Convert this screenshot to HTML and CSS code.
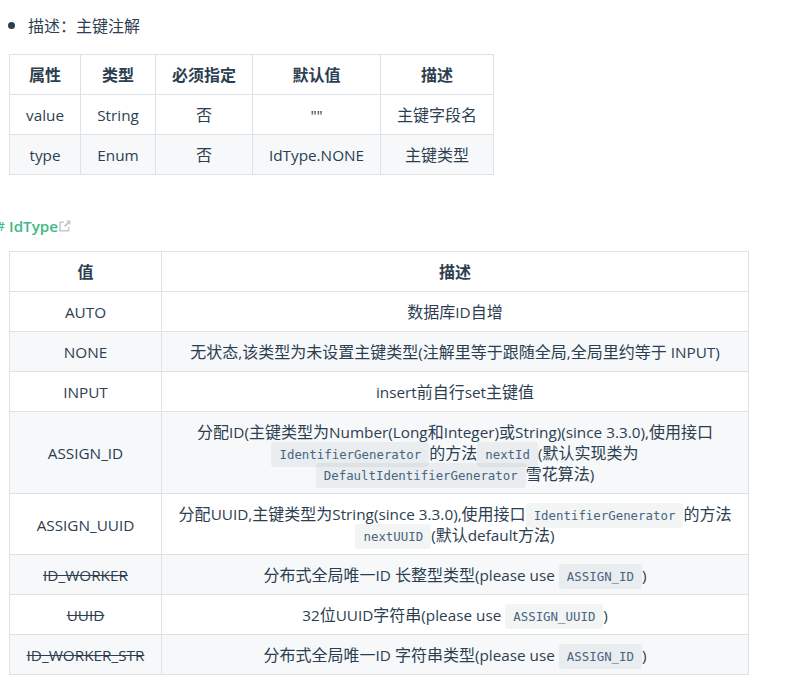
FILE: index.html
```html
<!DOCTYPE html>
<html lang="zh">
<head>
<meta charset="utf-8">
<title>IdType</title>
<link rel="stylesheet" href="styles.css">
</head>
<body>
<ul class="desc"><li>描述：主键注解</li></ul>
<table class="tbl tbl-a">
<colgroup><col class="a1"><col class="a2"><col class="a3"><col class="a4"><col class="a5"></colgroup>
<thead><tr><th>属性</th><th>类型</th><th>必须指定</th><th>默认值</th><th>描述</th></tr></thead>
<tbody>
<tr><td class="lat">value</td><td class="lat">String</td><td>否</td><td class="lat">""</td><td>主键字段名</td></tr>
<tr><td class="lat">type</td><td class="lat">Enum</td><td>否</td><td class="lat">IdType.NONE</td><td>主键类型</td></tr>
</tbody>
</table>
<h4 class="heading"><span class="hash">#</span>IdType<svg class="ext" width="12" height="12" viewBox="0 0 12 12" aria-hidden="true"><path d="M5 2.2H1v8.6h8.6V7" fill="none" stroke="#c8c8c8" stroke-width="1.5"/><path d="M7 .5h4.5V5L9.9 3.4 6.2 7.1 4.9 5.8l3.7-3.7z" fill="#c8c8c8"/></svg></h4>
<table class="tbl tbl-b">
<colgroup><col class="b1"><col class="b2"></colgroup>
<thead><tr><th>值</th><th>描述</th></tr></thead>
<tbody>
<tr><td class="lat">AUTO</td><td>数据库<span class="lat">ID</span>自增</td></tr>
<tr><td class="lat">NONE</td><td>无状态<span class="lat">,</span>该类型为未设置主键类型<span class="lat">(</span>注解里等于跟随全局<span class="lat">,</span>全局里约等于<span class="lat"> INPUT)</span></td></tr>
<tr><td class="lat">INPUT</td><td><span class="lat">insert</span>前自行<span class="lat">set</span>主键值</td></tr>
<tr><td class="lat">ASSIGN_ID</td><td>分配<span class="lat">ID(</span>主键类型为<span class="lat">Number(Long</span>和<span class="lat">Integer)</span>或<span class="lat">String)(since 3.3.0),</span>使用接口<code>IdentifierGenerator</code>的方法<code>nextId</code><span class="lat">(</span>默认实现类为<br><code>DefaultIdentifierGenerator</code>雪花算法<span class="lat">)</span></td></tr>
<tr><td class="lat">ASSIGN_UUID</td><td>分配<span class="lat">UUID,</span>主键类型为<span class="lat">String(since 3.3.0),</span>使用接口<code>IdentifierGenerator</code>的方法<code>nextUUID</code><span class="lat">(</span>默认<span class="lat">default</span>方法<span class="lat">)</span></td></tr>
<tr><td class="lat"><s>ID_WORKER</s></td><td>分布式全局唯一<span class="lat">ID </span>长整型类型<span class="lat">(please use </span><code>ASSIGN_ID</code><span class="lat">)</span></td></tr>
<tr><td class="lat"><s>UUID</s></td><td><span class="lat">32</span>位<span class="lat">UUID</span>字符串<span class="lat">(please use </span><code>ASSIGN_UUID</code><span class="lat">)</span></td></tr>
<tr><td class="lat"><s>ID_WORKER_STR</s></td><td>分布式全局唯一<span class="lat">ID </span>字符串类型<span class="lat">(please use </span><code>ASSIGN_ID</code><span class="lat">)</span></td></tr>
</tbody>
</table>
</body>
</html>
```
FILE: styles.css
```css
html, body {
  margin: 0;
  padding: 0;
  background: #fff;
}
body {
  height: 692px;
  overflow: hidden;
  font-family: "Open Sans", "Noto Sans CJK SC", sans-serif;
  font-size: 16px;
  line-height: 21px;
  color: #2c3e50;
}
.lat {
  font-size: 15.3px;
}
.desc {
  margin: 0;
  padding: 15px 0 0 28px;
}
.desc li {
  height: 22px;
}
.desc li::marker {
  font-size: 19px;
}
.tbl {
  border-collapse: collapse;
  table-layout: fixed;
  margin-left: 9px;
}
.tbl-a {
  width: 485px;
  margin-top: 17px;
}
.tbl-b {
  width: 740px;
}
.a1 { width: 71px; }
.a2 { width: 75px; }
.a3 { width: 97px; }
.a4 { width: 128px; }
.a5 { width: 113px; }
.b1 { width: 152px; }
.b2 { width: 587px; }
.tbl th, .tbl td {
  border: 1px solid #dfe2e5;
  padding: 10px 15px 8px;
  text-align: center;
}
.tbl th {
  font-weight: 700;
}
.tbl tbody tr:nth-child(odd) {
  background: #fff;
}
.tbl tbody tr:nth-child(even) {
  background: #f6f8fa;
}
.heading {
  position: relative;
  display: flex;
  align-items: center;
  margin: 41px 0 14px 9px;
  height: 21px;
  font-size: 15.2px;
  font-weight: 600;
  color: #42b983;
}
.hash {
  position: absolute;
  left: -12px;
  font-size: 12px;
  font-weight: 600;
}
.ext {
  margin-left: 1px;
  margin-top: -1px;
}
code {
  margin: 0;
  padding: 4.8px 8px;
  font-family: "DejaVu Sans Mono", monospace;
  font-size: 12.4px;
  line-height: 1;
  color: #476582;
  background: rgba(27, 31, 35, 0.05);
  border-radius: 3px;
}
```
